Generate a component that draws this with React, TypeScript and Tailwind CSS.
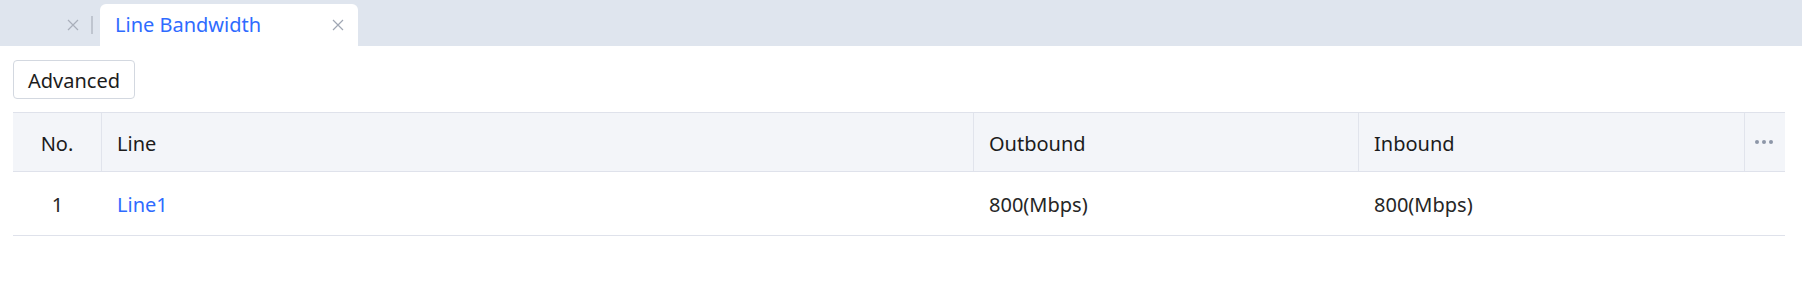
import React from 'react';

const rows = [{ no: 1, line: 'Line1', outbound: '800(Mbps)', inbound: '800(Mbps)' }];

function CloseIcon({ className }: { className?: string }) {
  return (
    <svg viewBox="0 0 12 12" className={className} fill="none" stroke="currentColor" strokeWidth="1.2">
      <path d="M1 1l10 10M11 1L1 11" />
    </svg>
  );
}

export default function App() {
  return (
    <div className="w-[1802px] h-[287px] bg-white text-[20px] text-[#1c1c1c]" style={{ fontFamily: '"Noto Sans", Arial, sans-serif' }}>
      {/* tab bar */}
      <div className="h-[46px] bg-[#dfe5ee] flex items-end">
        <div className="flex items-center h-[42px] pl-[67px] pr-[6px] text-[#a9afba]">
          <CloseIcon className="w-[12px] h-[12px]" />
          <span className="ml-[12px] w-[2px] h-[18px] bg-[#bfc5cf]" />
        </div>
        <div className="ml-[1px] w-[258px] h-[42px] bg-white rounded-t-[6px] flex items-center pl-[15px] pr-[14px]">
          <span className="text-[#2e6bff] flex-1 leading-none">Line Bandwidth</span>
          <CloseIcon className="w-[12px] h-[12px] text-[#a0a7b4]" />
        </div>
      </div>

      <div className="px-[13px] pt-[14px]">
        <button className="h-[39px] px-[14px] pt-[2px] border border-[#d3d8e0] rounded-[4px] bg-white text-[#1c1c1c] leading-none">
          Advanced
        </button>

        <div className="mt-[13px] w-[1772px]">
          <div className="grid grid-cols-[89px_872px_385px_386px_40px] h-[60px] bg-[#f3f5f9] border-y border-[#dfe2eb]">
            <div className="flex items-center justify-center pt-[3px] border-r border-[#e1e4ec]">No.</div>
            <div className="flex items-center pl-[15px] pt-[3px] border-r border-[#e1e4ec]">Line</div>
            <div className="flex items-center pl-[15px] pt-[3px] border-r border-[#e1e4ec]">Outbound</div>
            <div className="flex items-center pl-[15px] pt-[3px] border-r border-[#e1e4ec]">Inbound</div>
            <div className="flex items-center justify-center gap-[3px] pr-[2px]">
              <span className="w-[4px] h-[4px] rounded-full bg-[#8d96a8]" />
              <span className="w-[4px] h-[4px] rounded-full bg-[#8d96a8]" />
              <span className="w-[4px] h-[4px] rounded-full bg-[#8d96a8]" />
            </div>
          </div>
          {rows.map((r) => (
            <div key={r.no} className="grid grid-cols-[89px_872px_385px_386px_40px] h-[64px] border-b border-[#dfe2eb] text-[#262626]">
              <div className="flex items-center justify-center pt-[3px]">{r.no}</div>
              <div className="flex items-center pl-[15px] pt-[3px] text-[#2e6bff]">{r.line}</div>
              <div className="flex items-center pl-[15px] pt-[3px]">{r.outbound}</div>
              <div className="flex items-center pl-[15px] pt-[3px]">{r.inbound}</div>
              <div />
            </div>
          ))}
        </div>
      </div>
    </div>
  );
}
